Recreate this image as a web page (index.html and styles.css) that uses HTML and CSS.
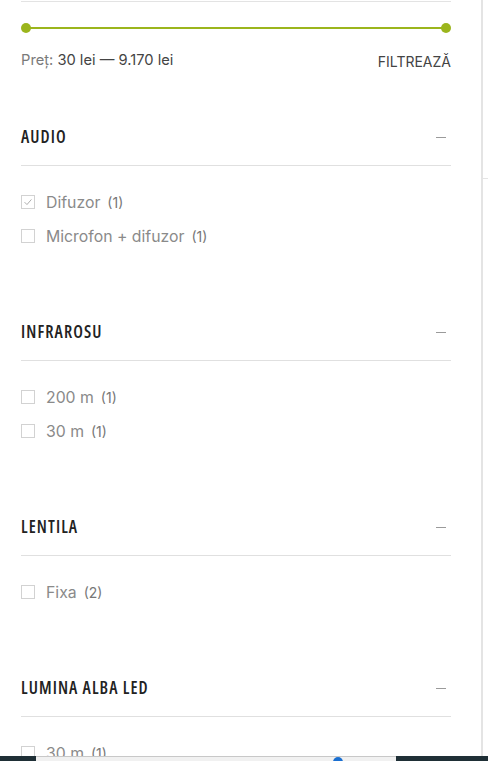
FILE: index.html
```html
<!DOCTYPE html>
<html lang="ro">
<head>
<meta charset="utf-8">
<title>Filtre</title>
<link rel="stylesheet" href="styles.css">
</head>
<body>
<div class="page">
  <aside class="sidebar">
    <div class="content">
      <div class="top-rule"></div>
      <div class="slider">
        <span class="dot"></span>
        <span class="track"></span>
        <span class="dot"></span>
      </div>
      <div class="price-row">
        <div class="price"><span class="price-label">Preț:</span> 30 lei — 9.170 lei</div>
        <button class="filter-btn">FILTREAZĂ</button>
      </div>

      <section class="filter first">
        <div class="filter-head"><h3>AUDIO</h3><span class="minus"></span></div>
        <ul class="options">
          <li><span class="cb checked"><svg viewBox="0 0 14 14" width="12" height="12"><path d="M3 7.2 L5.8 10 L11 4" fill="none" stroke="#a0a0a0" stroke-width="1"/></svg></span><span class="label">Difuzor</span><span class="count">(1)</span></li>
          <li><span class="cb"></span><span class="label">Microfon + difuzor</span><span class="count">(1)</span></li>
        </ul>
      </section>

      <section class="filter">
        <div class="filter-head"><h3>INFRAROSU</h3><span class="minus"></span></div>
        <ul class="options">
          <li><span class="cb"></span><span class="label">200 m</span><span class="count">(1)</span></li>
          <li><span class="cb"></span><span class="label">30 m</span><span class="count">(1)</span></li>
        </ul>
      </section>

      <section class="filter">
        <div class="filter-head"><h3>LENTILA</h3><span class="minus"></span></div>
        <ul class="options">
          <li><span class="cb"></span><span class="label">Fixa</span><span class="count">(2)</span></li>
        </ul>
      </section>

      <section class="filter">
        <div class="filter-head"><h3>LUMINA ALBA LED</h3><span class="minus"></span></div>
        <ul class="options">
          <li><span class="cb"></span><span class="label">30 m</span><span class="count">(1)</span></li>
        </ul>
      </section>
    </div>
  </aside>
  <div class="side-rest"></div>
</div>
<div class="bottom-bar">
  <span class="bb-dark left"></span>
  <span class="bb-mid"><span class="bb-dot"></span></span>
  <span class="bb-dark right"></span>
</div>
</body>
</html>
```

FILE: styles.css
```css
html, body {
  margin: 0;
  padding: 0;
  background: #fff;
  height: 100%;
  overflow: hidden;
}
body {
  font-family: Inter, "Noto Sans", sans-serif;
  color: #333;
}
.page {
  display: flex;
  min-height: 761px;
}
.sidebar {
  width: 481px;
  flex: none;
  border-right: 2px solid #e4e4e4;
}
.side-rest {
  flex: 1;
  margin-top: 178px;
  height: 0;
  border-top: 1px solid #e4e4e4;
}
.content {
  width: 430px;
  padding-left: 21px;
}
.top-rule {
  margin-top: 1px;
  height: 1px;
  background: #e3e3e3;
}
.slider {
  margin-top: 21px;
  height: 10px;
  display: flex;
  align-items: center;
}
.dot {
  width: 10px;
  height: 10px;
  border-radius: 50%;
  background: #9bb51c;
  flex: none;
}
.track {
  flex: 1;
  height: 2px;
  margin: 0 -5px;
  background: #9bb51c;
}
.price-row {
  margin-top: 17px;
  display: flex;
  justify-content: space-between;
  align-items: baseline;
  line-height: 20px;
}
.price {
  font-size: 14.7px;
  color: #444;
}
.price-label {
  color: #7a7a7a;
}
.filter-btn {
  border: 0;
  background: none;
  padding: 0;
  font-family: Inter, "Noto Sans", sans-serif;
  font-size: 14px;
  color: #444;
  position: relative;
  top: 2px;
}
.filter {
  margin-top: 69px;
}
.filter.first {
  margin-top: 57px;
}
.filter-head {
  display: flex;
  justify-content: space-between;
  align-items: center;
  height: 20px;
  padding-bottom: 18px;
  border-bottom: 1px solid #e0e0e0;
}
.filter-head h3 {
  margin: 0;
  font-family: "Open Sans", Roboto, sans-serif;
  font-stretch: 75%;
  font-weight: 600;
  font-size: 17px;
  letter-spacing: 1.1px;
  line-height: 20px;
  color: #222;
}
.minus {
  width: 10px;
  height: 1px;
  background: #9a9a9a;
  margin-right: 5px;
}
.options {
  list-style: none;
  margin: 0;
  padding: 19px 0 0;
}
.options li {
  height: 34px;
  display: flex;
  align-items: center;
}
.cb {
  width: 12px;
  height: 12px;
  border: 1px solid #d2d2d2;
  flex: none;
  margin-right: 11px;
  display: flex;
  align-items: center;
  justify-content: center;
}
.label {
  font-size: 15.8px;
  color: #8a8a8a;
}
.count {
  font-size: 14px;
  color: #777;
  margin-left: 7px;
}
.bottom-bar {
  position: fixed;
  left: 0;
  right: 0;
  bottom: 0;
  height: 5px;
  display: flex;
}
.bb-dark {
  background: #1f2f36;
}
.bb-dark.left { width: 36px; }
.bb-dark.right { flex: 1; }
.bb-mid {
  width: 360px;
  background: #f1f1f1;
  border-top: 1px solid #c8c8c8;
  position: relative;
  overflow: hidden;
}
.bb-dot {
  position: absolute;
  left: 297px;
  top: 0;
  width: 10px;
  height: 10px;
  border-radius: 50%;
  background: #1a6fd1;
}
```
